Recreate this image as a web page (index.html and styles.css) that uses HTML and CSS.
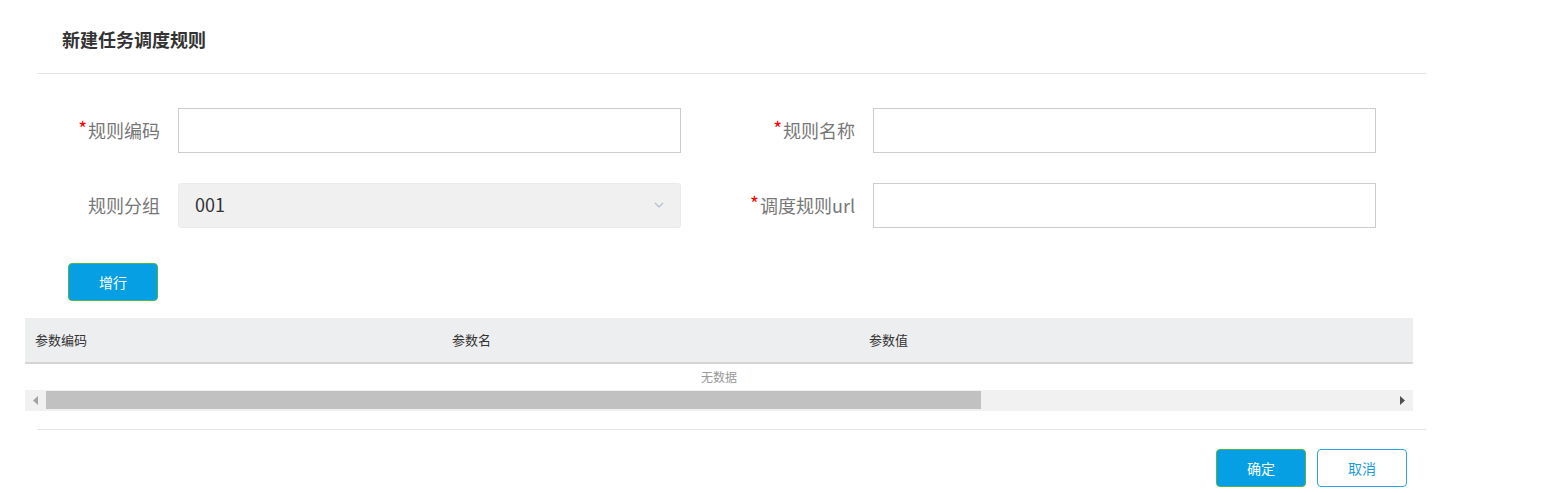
FILE: index.html
```html
<!DOCTYPE html>
<html lang="zh-CN">
<head>
<meta charset="utf-8">
<title>新建任务调度规则</title>
<link rel="stylesheet" href="styles.css">
</head>
<body>
<div class="dialog">
  <div class="dialog-header"><h1 class="dialog-title">新建任务调度规则</h1></div>
  <div class="dialog-body">
    <div class="form-grid">
      <div class="form-item">
        <label class="form-label"><span class="req">*</span>规则编码</label>
        <input class="form-input" type="text">
      </div>
      <div class="form-item">
        <label class="form-label"><span class="req">*</span>规则名称</label>
        <input class="form-input" type="text">
      </div>
      <div class="form-item">
        <label class="form-label">规则分组</label>
        <div class="form-select">
          <span class="select-value">001</span>
          <svg class="chevron" width="10" height="6" viewBox="0 0 10 6"><path d="M1 1 L5 5 L9 1" fill="none" stroke="#b4bccc" stroke-width="1.2"/></svg>
        </div>
      </div>
      <div class="form-item">
        <label class="form-label"><span class="req">*</span>调度规则url</label>
        <input class="form-input" type="text">
      </div>
    </div>
    <div class="toolbar"><button class="btn btn-primary">增行</button></div>
    <div class="table">
      <div class="table-head">
        <div class="th">参数编码</div>
        <div class="th">参数名</div>
        <div class="th">参数值</div>
      </div>
      <div class="table-empty">无数据</div>
      <div class="hscroll">
        <div class="hs-arrow"><svg width="5" height="9" viewBox="0 0 5 9"><path d="M5 0 L0 4.5 L5 9 Z" fill="#a3a3a3"/></svg></div>
        <div class="hs-track"><div class="hs-thumb"></div></div>
        <div class="hs-arrow"><svg width="5" height="9" viewBox="0 0 5 9"><path d="M0 0 L5 4.5 L0 9 Z" fill="#505050"/></svg></div>
      </div>
    </div>
  </div>
  <div class="dialog-footer">
    <button class="btn btn-primary">确定</button>
    <button class="btn btn-default">取消</button>
  </div>
</div>
</body>
</html>
```
FILE: styles.css
```css
* { box-sizing: border-box; }
body {
  margin: 0;
  background: #fff;
  font-family: "Microsoft YaHei", "Noto Sans CJK SC", "Noto Sans", sans-serif;
  color: #333;
}
.dialog {
  margin-left: 25px;
  width: 1413px;
}
.dialog-header {
  margin: 0 12px;
  height: 74px;
  border-bottom: 1px solid #e5e5e5;
  padding: 27px 0 0 25px;
}
.dialog-title {
  margin: 0;
  font-size: 18px;
  line-height: 24px;
  font-weight: bold;
  color: #333;
}
.dialog-body {
  padding-top: 34px;
}
.form-grid {
  margin-left: 12px;
  display: grid;
  grid-template-columns: 644px 644px;
  column-gap: 51px;
  row-gap: 30px;
}
.form-item {
  display: flex;
  align-items: center;
  height: 45px;
}
.form-label {
  width: 123px;
  margin-right: 18px;
  text-align: right;
  font-size: 18px;
  line-height: 24px;
  padding-bottom: 2px;
  color: #777;
  white-space: nowrap;
}
.req {
  color: #f00;
  font-size: 19px;
  position: relative;
  top: -2px;
  margin-right: 1px;
}
.form-input {
  width: 503px;
  height: 45px;
  border: 1px solid #ccc;
  background: #fff;
  margin: 0;
  padding: 0 16px;
  font-size: 17px;
  outline: none;
}
.form-select {
  width: 503px;
  height: 45px;
  border: 1px solid #ebebeb;
  border-radius: 3px;
  background: #f0f0f0;
  display: flex;
  align-items: center;
  justify-content: space-between;
  padding: 0 16px 2px 16px;
}
.select-value {
  font-size: 18px;
  line-height: 24px;
  padding-bottom: 2px;
  color: #333;
}
.chevron { display: block; }
.toolbar {
  margin-top: 35px;
  padding-left: 43px;
}
.btn {
  width: 90px;
  height: 38px;
  border-radius: 4px;
  font-family: inherit;
  font-size: 14px;
  padding: 0;
  cursor: pointer;
}
.btn-primary {
  background: #069fe3;
  color: #fff;
  border: 1px solid #52b44b;
}
.btn-default {
  background: #fff;
  color: #1b9be0;
  border: 1px solid #2ba3e6;
}
.table {
  margin-top: 17px;
  width: 1388px;
}
.table-head {
  display: flex;
  height: 46px;
  background: #edeef0;
  border-bottom: 2px solid #d5d5d5;
}
.th {
  width: 417px;
  padding-left: 10px;
  font-size: 13px;
  line-height: 43px;
  color: #333;
}
.table-empty {
  height: 26px;
  line-height: 26px;
  text-align: center;
  font-size: 12px;
  color: #999;
}
.hscroll {
  display: flex;
  height: 21px;
  background: #f1f1f1;
}
.hs-arrow {
  width: 21px;
  display: flex;
  align-items: center;
  justify-content: center;
}
.hs-track {
  flex: 1;
  padding: 1px 0 2px 0;
}
.hs-thumb {
  width: 935px;
  height: 100%;
  background: #c1c1c1;
}
.dialog-footer {
  margin: 18px 12px 0;
  border-top: 1px solid #e5e5e5;
  padding: 19px 19px 0 0;
  display: flex;
  justify-content: flex-end;
  gap: 11px;
}
```
